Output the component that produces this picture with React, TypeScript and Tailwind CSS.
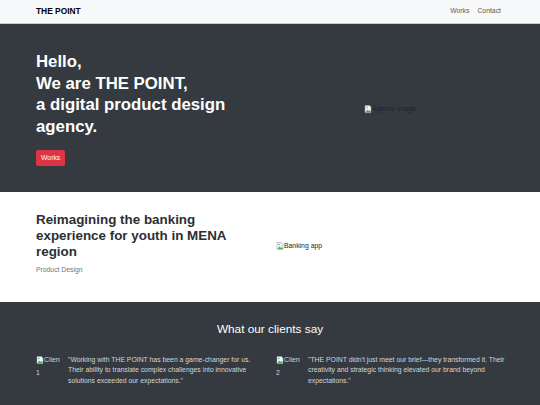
import React from "react";

function BrokenImg({ alt, className = "" }: { alt: string; className?: string }) {
    return (
        <span className={`inline-flex items-center whitespace-nowrap ${className}`}>
            <svg width="8" height="8" viewBox="0 0 16 16" className="shrink-0">
                <path d="M2 1h9l3 3v11H2z" fill="#f4f4f4" stroke="#9a9a9a" strokeWidth="1" />
                <path d="M3 14l4-5 3 3 2-2 2 4z" fill="#4caf50" />
                <circle cx="6" cy="5" r="1.5" fill="#5b9bd5" />
            </svg>
            <span>{alt}</span>
        </span>
    );
}

const testimonials = [
    {
        client: "Client",
        num: "1",
        quote: "\"Working with THE POINT has been a game-changer for us. Their ability to translate complex challenges into innovative solutions exceeded our expectations.\"",
    },
    {
        client: "Client",
        num: "2",
        quote: "\"THE POINT didn't just meet our brief\u2014they transformed it. Their creativity and strategic thinking elevated our brand beyond expectations.\"",
    },
];

export default function App() {
    return (
        <div className="min-h-screen bg-white font-['Liberation_Sans',Arial,sans-serif] text-[#212529]">
            {/* navbar */}
            <nav className="h-[24px] bg-[#f8f9fa] border-b border-[#c9cbcd]">
                <div className="mx-[36px] h-full flex items-center justify-between">
                    <span className="text-[8.4px] font-bold text-black">THE POINT</span>
                    <div className="flex text-[6.85px] text-[#5a5a5a]">
                        <a className="px-[4px]">Works</a>
                        <a className="pl-[4px] pr-[3px]">Contact</a>
                    </div>
                </div>
            </nav>

            {/* hero */}
            <section className="bg-[#343a40] pt-[27px] pb-[25px]">
                <div className="mx-[36px] grid grid-cols-2 gap-x-[12px] items-center">
                    <div>
                        <h1 className="text-[16.8px] leading-[21.6px] font-bold text-white">
                            Hello,<br />We are THE POINT,<br />a digital product design agency.
                        </h1>
                        <button className="mt-[12.5px] h-[16px] px-[5px] rounded-[2px] bg-[#dc3545] text-white text-[6.85px]">
                            Works
                        </button>
                    </div>
                    <div className="flex justify-center text-[6.85px] text-[#212529]">
                        <BrokenImg alt="Agency image" />
                    </div>
                </div>
            </section>

            {/* featured work */}
            <section className="pt-[20px] pb-[19px]">
                <div className="mx-[36px] grid grid-cols-2 gap-x-[12px] items-center">
                    <div>
                        <h3 className="text-[13.4px] leading-[16.3px] font-bold text-[#2b2f33] mb-[4px]">
                            Reimagining the banking experience for youth in MENA region
                        </h3>
                        <p className="text-[6.8px] leading-[10px] text-[#6c757d] mb-[8px]">Product Design</p>
                    </div>
                    <div className="text-[6.85px] text-[#212529]">
                        <BrokenImg alt="Banking app" />
                    </div>
                </div>
            </section>

            {/* testimonials */}
            <section className="bg-[#343a40] pt-[20px] pb-[30px]">
                <h4 className="text-center text-white text-[11.8px] leading-[14.2px] mb-[19px]">What our clients say</h4>
                <div className="ml-[36px] mr-[30px] grid grid-cols-[228px_1fr] gap-x-[12px]">
                    {testimonials.map((t) => (
                        <div key={t.num} className="flex">
                            <div className="w-[24px] h-[24px] mr-[8px] shrink-0 overflow-hidden text-[6.85px] leading-[10.5px] text-[#ced4da]">
                                <BrokenImg alt={t.client} /> {t.num}
                            </div>
                            <p className="text-[6.85px] leading-[10.5px] text-[#d3d6d9]">{t.quote}</p>
                        </div>
                    ))}
                </div>
            </section>
        </div>
    );
}
